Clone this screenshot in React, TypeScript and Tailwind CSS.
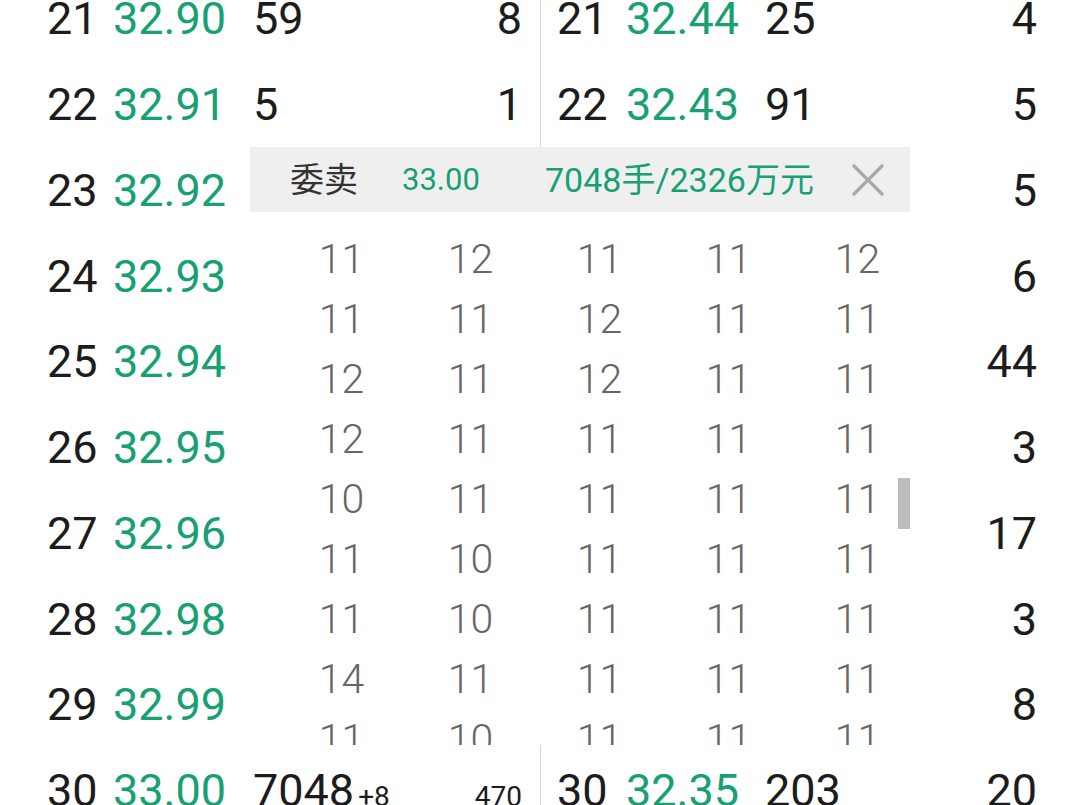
import React from "react";

type R = { idx: string; price: string; vol: React.ReactNode; right: React.ReactNode };

const left: R[] = [
  { idx: "21", price: "32.90", vol: "59", right: "8" },
  { idx: "22", price: "32.91", vol: "5", right: "1" },
  { idx: "23", price: "32.92", vol: "12", right: "2" },
  { idx: "24", price: "32.93", vol: "30", right: "4" },
  { idx: "25", price: "32.94", vol: "18", right: "3" },
  { idx: "26", price: "32.95", vol: "22", right: "5" },
  { idx: "27", price: "32.96", vol: "41", right: "6" },
  { idx: "28", price: "32.98", vol: "16", right: "2" },
  { idx: "29", price: "32.99", vol: "27", right: "3" },
  {
    idx: "30",
    price: "33.00",
    vol: (
      <span className="flex items-baseline">
        <span>7048</span>
        <span className="ml-[4px] text-[28px]">+8</span>
      </span>
    ),
    right: <span className="text-[28px]">470</span>,
  },
];

const right: R[] = [
  { idx: "21", price: "32.44", vol: "25", right: "4" },
  { idx: "22", price: "32.43", vol: "91", right: "5" },
  { idx: "23", price: "32.42", vol: "14", right: "5" },
  { idx: "24", price: "32.41", vol: "33", right: "6" },
  { idx: "25", price: "32.40", vol: "120", right: "44" },
  { idx: "26", price: "32.39", vol: "19", right: "3" },
  { idx: "27", price: "32.38", vol: "86", right: "17" },
  { idx: "28", price: "32.37", vol: "21", right: "3" },
  { idx: "29", price: "32.36", vol: "40", right: "8" },
  { idx: "30", price: "32.35", vol: "203", right: "20" },
];

const grid: string[][] = [
  ["11", "12", "11", "11", "12"],
  ["11", "11", "12", "11", "11"],
  ["12", "11", "12", "11", "11"],
  ["12", "11", "11", "11", "11"],
  ["10", "11", "11", "11", "11"],
  ["11", "10", "11", "11", "11"],
  ["11", "10", "11", "11", "11"],
  ["14", "11", "11", "11", "11"],
  ["11", "10", "11", "11", "11"],
];

function LeftRow({ r }: { r: R }) {
  return (
    <div className="flex h-[85.75px] items-center pl-[47px] pr-[18px]">
      <div className="w-[66px]">{r.idx}</div>
      <div className="w-[140px] text-[#17a072]">{r.price}</div>
      <div className="flex-1">{r.vol}</div>
      <div className="text-right">{r.right}</div>
    </div>
  );
}

function RightRow({ r }: { r: R }) {
  return (
    <div className="flex h-[85.75px] items-center pl-[16px] pr-[47px]">
      <div className="w-[69px]">{r.idx}</div>
      <div className="w-[139px] text-[#17a072]">{r.price}</div>
      <div className="flex-1">{r.vol}</div>
      <div className="text-right">{r.right}</div>
    </div>
  );
}

export default function App() {
  return (
    <div className="relative h-[805px] w-[1084px] overflow-hidden bg-white font-['Roboto','Noto_Sans_CJK_SC',sans-serif] text-[45px] leading-none text-[#1c1c1c]">
      <div className="flex h-full">
        <div className="mt-[-24px] w-[540px]">
          {left.map((r) => (
            <LeftRow key={r.idx} r={r} />
          ))}
        </div>
        <div className="h-full w-px bg-[#d6d6d6]" />
        <div className="mt-[-24px] flex-1">
          {right.map((r) => (
            <RightRow key={r.idx} r={r} />
          ))}
        </div>
      </div>

      <div className="absolute left-[250px] top-[147px] h-[598px] w-[660px] overflow-hidden bg-white">
        <div className="flex h-[65px] items-center bg-[#efefef] pl-[40px] pr-[25px]">
          <span className="w-[112px] text-[34px] text-[#333333]">委卖</span>
          <span className="w-[143px] text-[31px] text-[#17a072]">33.00</span>
          <span className="text-[34px] text-[#17a072]">7048手/2326万元</span>
          <svg className="ml-auto" width="34" height="34" viewBox="0 0 34 34">
            <path d="M2 2 L32 32 M32 2 L2 32" stroke="#a9a9a9" strokeWidth="3.2" fill="none" />
          </svg>
        </div>
        <div className="pl-[27px] pt-[17px]">
          {grid.map((row, i) => (
            <div key={i} className="grid h-[60px] grid-cols-[repeat(5,129px)] items-center text-[41px] font-light text-[#666666]">
              {row.map((v, j) => (
                <div key={j} className="text-center">
                  {v}
                </div>
              ))}
            </div>
          ))}
        </div>
        <div className="absolute left-[648px] top-[331px] h-[51px] w-[12px] bg-[#bdbcbe]" />
      </div>
    </div>
  );
}
